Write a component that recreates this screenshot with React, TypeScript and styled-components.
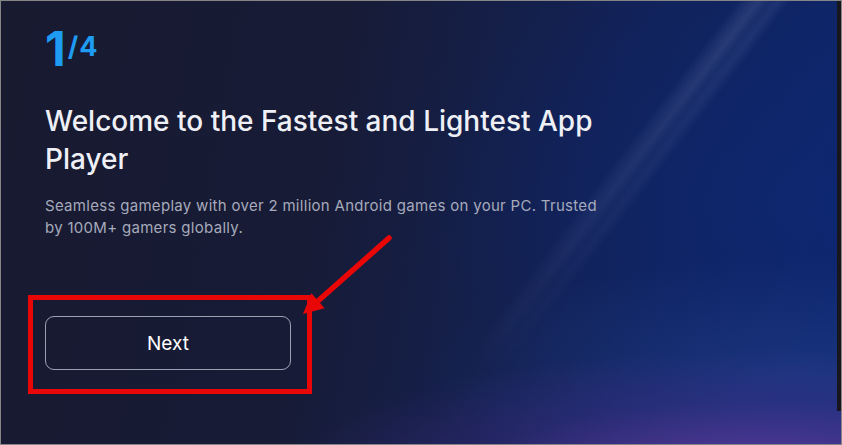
import React from "react"
import styled, { createGlobalStyle } from "styled-components"

const GlobalStyle = createGlobalStyle`
  html, body {
    margin: 0;
    padding: 0;
    background: #7f7f7f;
  }
  * {
    box-sizing: border-box;
  }
`

const Frame = styled.div`
  position: relative;
  width: 842px;
  height: 445px;
  border: 1px solid #858585;
  overflow: hidden;
  font-family: Inter, "Liberation Sans", sans-serif;
  background:
    radial-gradient(ellipse 480px 130px at 90% 108%, rgba(112, 62, 168, 0.85), rgba(80, 50, 150, 0.3) 60%, transparent 100%),
    radial-gradient(ellipse 380px 120px at 95% 85%, rgba(40, 70, 150, 0.45), transparent 100%),
    radial-gradient(ellipse 420px 260px at 100% 45%, rgba(12, 40, 120, 0.55), transparent 100%),
    linear-gradient(100deg, #181a30 0%, #171b36 38%, #122258 70%, #0d266b 100%);

  &::before {
    content: "";
    position: absolute;
    inset: 0;
    background: linear-gradient(
      127.5deg,
      transparent 62.4%,
      rgba(170, 180, 230, 0.09) 63.3%,
      rgba(190, 200, 240, 0.14) 64.2%,
      rgba(170, 180, 230, 0.07) 65.1%,
      rgba(170, 180, 230, 0.1) 65.9%,
      transparent 67%
    );
    -webkit-mask-image: linear-gradient(200deg, #000 10%, rgba(0, 0, 0, 0.55) 40%, transparent 68%);
    mask-image: linear-gradient(200deg, #000 10%, rgba(0, 0, 0, 0.55) 40%, transparent 68%);
    pointer-events: none;
  }
`

const ScrollStrip = styled.div`
  position: absolute;
  top: 0;
  right: 0;
  width: 4px;
  height: 410px;
  background: #16161c;
`

const Content = styled.div`
  position: relative;
  display: flex;
  flex-direction: column;
  align-items: flex-start;
  padding: 24px 0 0 44px;
`

const Step = styled.div`
  display: flex;
  align-items: flex-start;
  color: #1e9bf2;
  font-weight: 700;
`

const StepCurrent = styled.span`
  font-size: 48px;
  line-height: 48px;
`

const StepTotal = styled.span`
  font-size: 27px;
  line-height: 27px;
  margin-top: 8px;
  margin-left: 2px;
  letter-spacing: 1px;
`

const Title = styled.h1`
  margin: 29px 0 0;
  width: 570px;
  color: #eef0f6;
  font-size: 28px;
  line-height: 38px;
  font-weight: 500;
  letter-spacing: 0;
`

const Subtitle = styled.p`
  margin: 17px 0 0;
  width: 556px;
  color: #a6aabb;
  font-size: 15px;
  line-height: 22px;
  font-weight: 400;
  letter-spacing: 0.3px;
`

const Highlight = styled.div`
  margin: 56px 0 0 -17px;
  padding: 16px 16px 19px 12px;
  border: 5.5px solid #e80606;
`

const NextButton = styled.button`
  width: 246px;
  height: 54px;
  border: 1px solid rgba(200, 205, 222, 0.75);
  border-radius: 9px;
  background: transparent;
  color: #ffffff;
  font-family: inherit;
  font-size: 19px;
  font-weight: 400;
  cursor: pointer;
`

const Arrow = styled.svg`
  position: absolute;
  left: 0;
  top: 0;
  pointer-events: none;
`

export default function App() {
  return (
    <>
      <GlobalStyle />
      <Frame>
        <Content>
          <Step>
            <StepCurrent>1</StepCurrent>
            <StepTotal>/4</StepTotal>
          </Step>
          <Title>Welcome to the Fastest and Lightest App Player</Title>
          <Subtitle>
            Seamless gameplay with over 2 million Android games on your PC. Trusted by 100M+ gamers
            globally.
          </Subtitle>
          <Highlight>
            <NextButton>Next</NextButton>
          </Highlight>
        </Content>
        <Arrow width="842" height="445" viewBox="-1 -1 842 445">
          <line x1="387" y1="236" x2="316" y2="299" stroke="#e80606" strokeWidth="5.5" strokeLinecap="round" />
          <polygon points="301,312 309.4,291.3 322.6,306.3" fill="#e80606" />
        </Arrow>
        <ScrollStrip />
      </Frame>
    </>
  )
}
